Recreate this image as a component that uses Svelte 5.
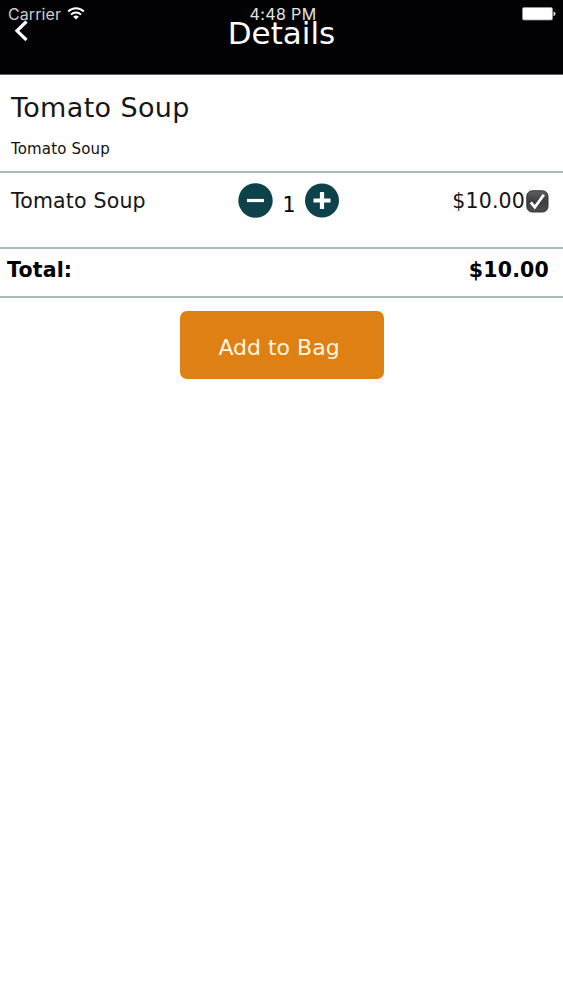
<script>
  let quantity = $state(1);
  let selected = $state(true);
  const price = 10;
  const total = $derived(selected ? price * quantity : 0);
</script>

<main class="screen">
  <header>
    <div class="status">
      <div class="carrier">
        <span>Carrier</span>
        <svg width="18" height="13" viewBox="0 0 18 13" fill="none" stroke="#fff" stroke-width="2">
          <path d="M1.2 4.5C5.5.2 12.500.2 16.800 4.500" />
          <path d="M4 7.600C6.800 4.800 11.200 4.800 14 7.600" />
          <path d="M9 12.500L6.200 9.700C7.800 8.200 10.200 8.200 11.800 9.700Z" fill="#fff" stroke="none" />
        </svg>
      </div>
      <span class="time">4:48 PM</span>
      <svg class="battery" width="34" height="14" viewBox="0 0 34 14">
        <rect x=".5" y=".5" width="30" height="12.500" rx="1.500" fill="#fff" stroke="#999" stroke-width=".8" />
        <path d="M31.500 4.500Q33.600 5 33.600 6.800T31.500 9.200Z" fill="#ddd" />
      </svg>
    </div>
    <div class="nav">
      <svg class="back" width="15" height="22" viewBox="0 0 15 22" fill="none" stroke="#fff" stroke-width="3.200">
        <path d="M12.500 1.500L3 10.800L12.500 20" />
      </svg>
      <h1>Details</h1>
    </div>
  </header>

  <section class="intro">
    <h2>Tomato Soup</h2>
    <p>Tomato Soup</p>
  </section>

  <section class="item">
    <span class="name">Tomato Soup</span>
    <div class="stepper">
      <button aria-label="Decrease" onclick={() => (quantity = Math.max(1, quantity - 1))}>
        <svg width="35" height="35" viewBox="0 0 35 35"><circle cx="17.500" cy="17.500" r="17.200" fill="#0d424b" /><path d="M9 17.500H26" stroke="#fff" stroke-width="3.200" /></svg>
      </button>
      <span class="qty">{quantity}</span>
      <button aria-label="Increase" onclick={() => quantity++}>
        <svg width="35" height="35" viewBox="0 0 35 35"><circle cx="17" cy="17.500" r="17" fill="#0d424b" /><path d="M8.500 17.500H25.500M17 9V26" stroke="#fff" stroke-width="4.200" /></svg>
      </button>
    </div>
    <span class="price">${price.toFixed(2)}</span>
    <button class="check" aria-label="Selected" onclick={() => (selected = !selected)}>
      <svg width="23" height="23" viewBox="0 0 23 23">
        <defs><linearGradient id="shade" x2="0" y2="1"><stop stop-color="#606062" /><stop offset=".5" stop-color="#3d3d3f" /><stop offset="1" stop-color="#4d4d4f" /></linearGradient></defs>
        <rect x=".8" y=".8" width="21.200" height="21.200" rx="5.500" fill="url(#shade)" stroke="#343436" />
        {#if selected}<path d="M4.800 12.400L8.800 17.200L17.800 4.800" fill="none" stroke="#fff" stroke-width="2.800" />{/if}
      </svg>
    </button>
  </section>

  <section class="total">
    <span>Total:</span>
    <span class="sum">${total.toFixed(2)}</span>
  </section>

  <button class="add">Add to Bag</button>
</main>

<style>
  :global(body) { margin: 0; background: #fff; }
  .screen {
    display: flex;
    flex-direction: column;
    height: 1000px;
    overflow: hidden;
    background: #fefefe;
    color: #161618;
    font-family: "DejaVu Sans", Verdana, sans-serif;
    white-space: nowrap;
  }
  svg { display: block; flex: none; }
  h1, h2, p { margin: 0; font-weight: 400; }
  button { border: 0; padding: 0; background: none; font: inherit; color: inherit; }
  header {
    box-sizing: border-box;
    height: 75px;
    background: #020103;
    border-bottom: 1px solid #626164;
    color: #fff;
  }
  .status {
    box-sizing: border-box;
    display: grid;
    grid-template-columns: 1fr auto 1fr;
    height: 20px;
    padding: 6px 7px 0 8px;
    font: 16px/16px Inter, sans-serif;
  }
  .carrier { display: flex; gap: 6px; color: #ccc; letter-spacing: .1px; }
  .carrier svg { margin-top: 1px; }
  .time { color: #e4e4e4; margin-left: 2px; letter-spacing: .4px; }
  .battery { justify-self: end; margin-top: 1px; }
  .nav {
    display: grid;
    grid-template-columns: 1fr auto 1fr;
    height: 54px;
  }
  .back { margin: 0 0 0 14px; }
  h1 { font-size: 31px; line-height: 30px; margin-top: -2px; }
  .intro {
    box-sizing: border-box;
    height: 96px;
    padding: 13px 11px 0;
  }
  h2 { font-size: 27px; line-height: 40px; letter-spacing: .35px; }
  p { font-size: 15px; line-height: 22px; margin-top: 10px; color: #111; letter-spacing: .15px; }
  .item {
    box-sizing: border-box;
    display: flex;
    align-items: flex-start;
    height: 76px;
    padding: 10px 14px 0 11px;
    border-top: 2px solid #a5bdb9;
    font-size: 20.500px;
    line-height: 35px;
  }
  .name { width: 227px; margin-top: 1px; letter-spacing: .18px; }
  .stepper { display: flex; width: 102px; justify-content: space-between; }
  .stepper button { height: 35px; line-height: 0; }
  .qty { margin-top: 5px; color: #000; }
  .price { margin: 1px 1px 0 auto; letter-spacing: .15px; }
  .check { height: 23px; margin: 7px 0 0; line-height: 0; }
  .total {
    box-sizing: border-box;
    display: flex;
    justify-content: space-between;
    height: 51px;
    padding: 4px 14px 0 7px;
    border-top: 2px solid #a5bdb9;
    border-bottom: 2px solid #a5bdb9;
    font-size: 20.500px;
    font-weight: 700;
    line-height: 34px;
    letter-spacing: .17px;
    color: #000;
  }
  .add {
    align-self: center;
    box-sizing: border-box;
    width: 204px;
    height: 68px;
    margin-top: 13px;
    padding: 5px 5px 0 0;
    border-radius: 7px;
    background: #df8014;
    color: #fff5df;
    font-size: 22px;
    line-height: 63px;
  }
</style>
